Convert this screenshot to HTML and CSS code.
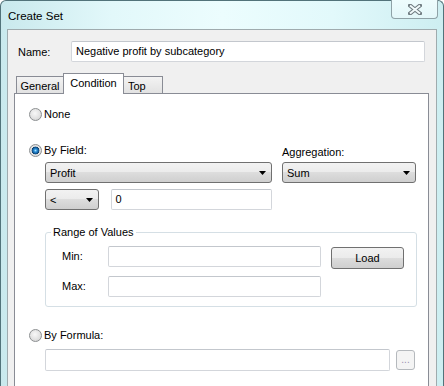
FILE: index.html
```html
<!DOCTYPE html>
<html>
<head>
<meta charset="utf-8">
<link rel="stylesheet" href="styles.css">
</head>
<body>
<div class="frame">
  <div class="titlebar">
    <div class="title">Create Set</div>
    <div class="close">
      <svg width="14" height="11" viewBox="0 0 14 11">
        <path d="M2 1.5L12 9.5M12 1.5L2 9.5" stroke="#6f7b80" stroke-width="4" stroke-linecap="square"/>
        <path d="M2 1.5L12 9.5M12 1.5L2 9.5" stroke="#f2fbfc" stroke-width="2" stroke-linecap="butt"/>
      </svg>
    </div>
  </div>
  <div class="client">
    <div class="name-row">
      <span class="name-label">Name:</span>
      <div class="textbox name-box">Negative profit by subcategory</div>
    </div>
    <div class="tabs">
      <div class="tab tab-general">General</div>
      <div class="tab tab-active">Condition</div>
      <div class="tab tab-top">Top</div>
    </div>
    <div class="panel">
      <div class="radio-row opt-none"><span class="radio"></span><span class="radio-text">None</span></div>
      <div class="byfield">
        <div class="col-left">
          <div class="radio-row"><span class="radio checked"></span><span class="radio-text">By Field:</span></div>
          <div class="combo wide"><span>Profit</span><svg class="arrow" width="7" height="4" viewBox="0 0 7 4"><path d="M0 0H7L3.5 4Z" fill="#000"/></svg></div>
          <div class="op-row">
            <div class="combo small"><span>&lt;</span><svg class="arrow" width="7" height="4" viewBox="0 0 7 4"><path d="M0 0H7L3.5 4Z" fill="#000"/></svg></div>
            <div class="textbox val">0</div>
          </div>
        </div>
        <div class="col-right">
          <div class="agg-label">Aggregation:</div>
          <div class="combo agg"><span>Sum</span><svg class="arrow" width="7" height="4" viewBox="0 0 7 4"><path d="M0 0H7L3.5 4Z" fill="#000"/></svg></div>
        </div>
      </div>
      <fieldset class="range">
        <legend>Range of Values</legend>
        <div class="range-row">
          <span class="range-label">Min:</span>
          <div class="textbox range-box"></div>
          <div class="button load">Load</div>
        </div>
        <div class="range-row second">
          <span class="range-label">Max:</span>
          <div class="textbox range-box"></div>
        </div>
      </fieldset>
      <div class="radio-row opt-formula"><span class="radio"></span><span class="radio-text">By Formula:</span></div>
      <div class="formula-row">
        <div class="textbox formula-box"></div>
        <div class="button dots">...</div>
      </div>
    </div>
  </div>
</div>
</body>
</html>
```

FILE: styles.css
```css
html, body {
  margin: 0;
  padding: 0;
}
body {
  width: 444px;
  height: 386px;
  overflow: hidden;
  font-family: "Liberation Sans", Arial, sans-serif;
  font-size: 11px;
  color: #000;
  background: #ffffff;
}
.frame {
  box-sizing: border-box;
  width: 444px;
  height: 400px;
  border: 1px solid #52737a;
  border-bottom: none;
  border-radius: 6px 6px 0 0;
  background: linear-gradient(to right, #c9e9ed 0%, #e2f8fa 25%, #ecfdfe 50%, #e2f9fb 75%, #cdeef1 100%);
  padding: 0 6px;
  display: flex;
  flex-direction: column;
}
.titlebar {
  height: 28px;
  display: flex;
  justify-content: space-between;
  align-items: flex-start;
}
.title {
  margin-top: 8px;
  padding-left: 1px;
  font-size: 11.5px;
  line-height: 14px;
}
.close {
  box-sizing: border-box;
  width: 47px;
  height: 19px;
  margin-right: -1px;
  margin-top: -1px;
  border: 1px solid #8fa2a7;
  border-top: none;
  border-radius: 0 0 4px 4px;
  background: linear-gradient(#eefcfd, #e3f7f9);
  display: flex;
  justify-content: center;
  align-items: center;
  padding-top: 1px;
}
.client {
  flex: 1;
  background: #f0f0f0;
  border: 1px solid #9fabae;
  border-bottom: none;
  padding: 11px 7px 0 6px;
  display: flex;
  flex-direction: column;
}
.name-row {
  display: flex;
  align-items: center;
}
.name-label {
  margin-left: 4px;
  width: 53px;
}
.textbox {
  box-sizing: border-box;
  background: #fff;
  border: 1px solid #d3d6db;
  border-top-color: #c3c7cd;
  border-radius: 2px;
  height: 21px;
  line-height: 19px;
  padding-left: 4px;
}
.name-box {
  width: 354px;
}
.tabs {
  display: flex;
  align-items: flex-end;
  margin-top: 11px;
  margin-left: 2px;
}
.tab {
  box-sizing: border-box;
  height: 17px;
  border: 1px solid #898c95;
  border-bottom: none;
  background: linear-gradient(#f3f3f3, #e2e2e2);
  line-height: 14px;
  padding-top: 2px;
  text-align: center;
}
.tab-general {
  width: 48px;
}
.tab-active {
  width: 61px;
  height: 21px;
  margin-left: -1px;
  margin-bottom: -1px;
  background: #fff;
  position: relative;
  z-index: 1;
  padding-top: 2px;
}
.tab-top {
  width: 40px;
  margin-left: -1px;
  text-align: left;
  padding-left: 4px;
}
.panel {
  flex: 1;
  width: 415px;
  box-sizing: border-box;
  background: #fff;
  border: 1px solid #898c95;
  padding-left: 14px;
}
.radio-row {
  display: flex;
  align-items: center;
  height: 13px;
}
.radio {
  box-sizing: border-box;
  width: 13px;
  height: 13px;
  border-radius: 50%;
  border: 1px solid #8c8f91;
  background: radial-gradient(circle at 45% 40%, #f8f8f8 0%, #e2e2e2 55%, #cbcbcb 100%);
}
.radio.checked {
  background: radial-gradient(circle at 50% 50%, #a6e3ff 0px, #2c8fd8 1.5px, #125a97 3px, #0c3f6c 3.6px, #e4e4e4 4.2px, #d2d2d2 100%);
}
.radio-text {
  margin-left: 2px;
  line-height: 13px;
}
.opt-none {
  margin-top: 14px;
}
.byfield {
  display: flex;
  margin-top: 23px;
}
.col-left {
  width: 243px;
}
.col-right {
  margin-left: 10px;
  width: 134px;
}
.combo {
  box-sizing: border-box;
  height: 21px;
  border: 1px solid #707070;
  border-radius: 3px;
  background: linear-gradient(#f2f2f2 0%, #ebebeb 50%, #dddddd 50%, #cfcfcf 100%);
  display: flex;
  justify-content: space-between;
  align-items: center;
  padding: 0 5px 0 4px;
}
.arrow {
  display: block;
}
.combo.wide {
  width: 227px;
  margin: 5px 0 0 16px;
}
.op-row {
  display: flex;
  margin: 6px 0 0 16px;
}
.combo.small {
  width: 54px;
}
.textbox.val {
  margin-left: 12px;
  width: 163px;
}
.agg-label {
  padding-top: 2px;
  line-height: 13px;
}
.combo.agg {
  margin-top: 3px;
  width: 134px;
}
.range {
  box-sizing: border-box;
  width: 372px;
  margin: 16px 0 0 16px;
  padding: 7px 0 9px 0;
  border: 1px solid #d5dfe5;
  border-radius: 3px;
  min-width: 0;
}
.range legend {
  margin-left: 5px;
  padding: 0 2px;
  line-height: 13px;
}
.range-row {
  display: flex;
  align-items: flex-start;
  margin-left: 16px;
}
.range-row.second {
  margin-top: 7px;
}
.range-label {
  width: 46px;
  line-height: 21px;
}
.range-box {
  width: 213px;
}
.button {
  box-sizing: border-box;
  border: 1px solid #707070;
  border-radius: 3px;
  background: linear-gradient(#f2f2f2 0%, #ebebeb 50%, #dddddd 50%, #cfcfcf 100%);
  text-align: center;
}
.load {
  width: 73px;
  height: 22px;
  line-height: 20px;
  margin: 1px 0 0 10px;
}
.opt-formula {
  margin-top: 22px;
}
.formula-row {
  display: flex;
  align-items: flex-start;
  margin: 7px 0 0 16px;
}
.formula-box {
  width: 345px;
  height: 22px;
}
.dots {
  width: 19px;
  height: 20px;
  margin: 1px 0 0 6px;
  border-color: #b5b9bd;
  background: #f4f4f4;
  color: #9a8fb0;
  line-height: 18px;
  font-size: 10px;
  letter-spacing: 0;
}
```
